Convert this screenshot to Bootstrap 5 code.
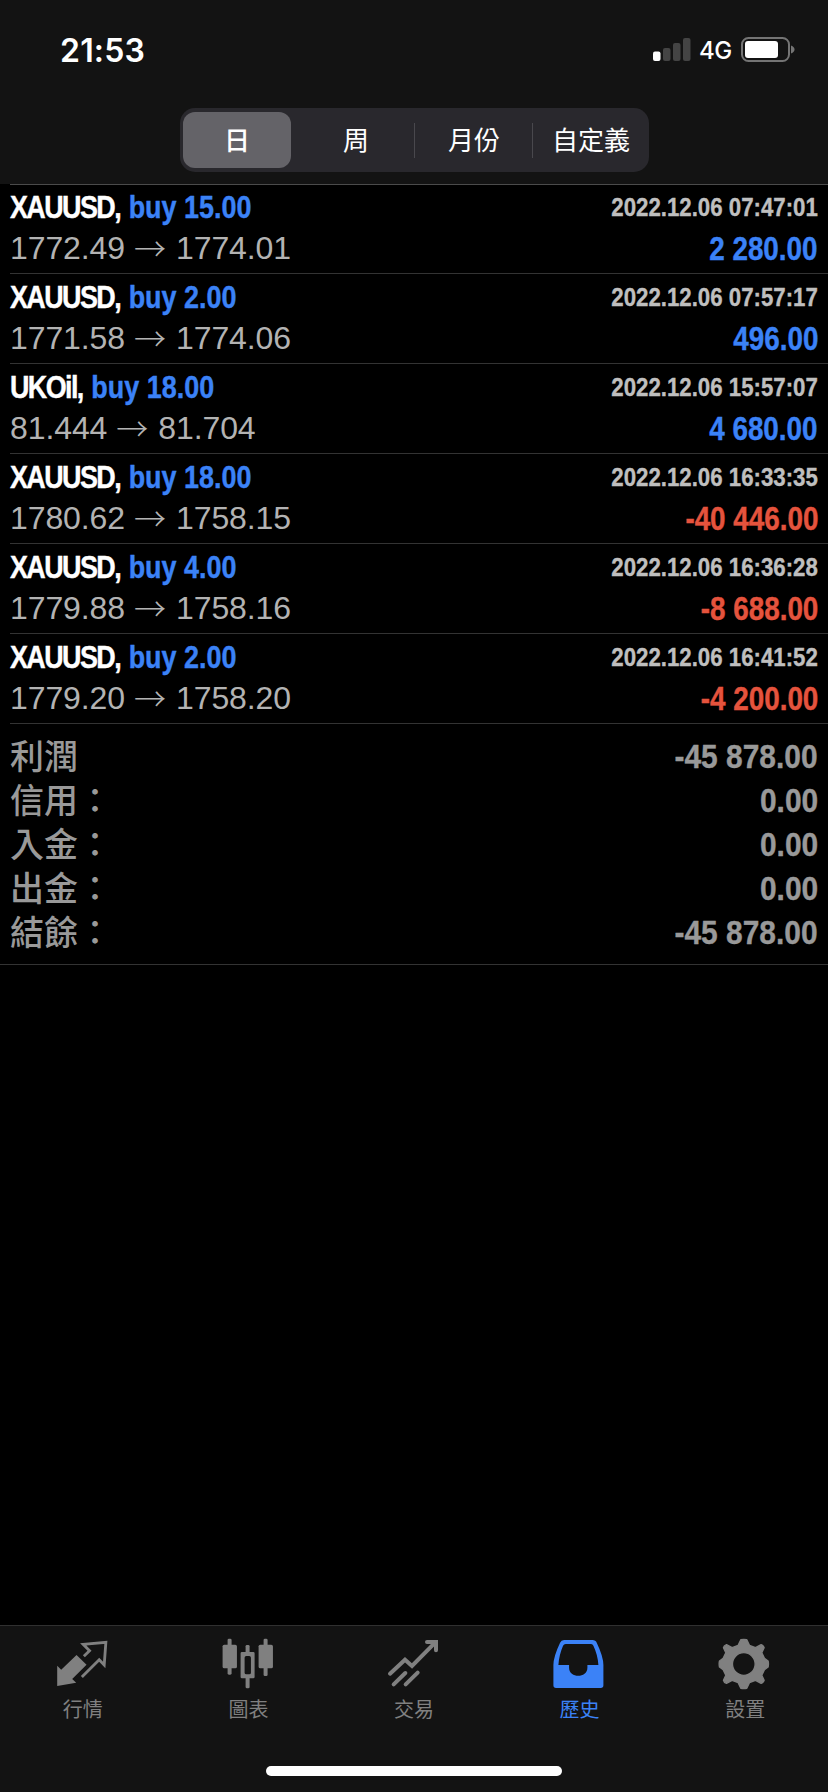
<!DOCTYPE html>
<html lang="zh-Hant" data-bs-theme="dark">
<head>
<meta charset="utf-8">
<meta name="viewport" content="width=device-width, initial-scale=1">
<title>歷史</title>
<link href="https://cdn.jsdelivr.net/npm/bootstrap@5.3.0/dist/css/bootstrap.min.css" rel="stylesheet">
<style>
  :root { --accent: #3b82f7; --loss: #e5533d; --bar: #131313; --cjk: "Noto Sans CJK TC", sans-serif; }
  body { background: #000; font-family: "Liberation Sans", var(--cjk); height: 1792px; overflow: hidden; }
  .top-bar { height: 184px; background: var(--bar); }
  .status { height: 108px; padding: 0 33px 0 60px; font-family: Inter, sans-serif; color: #fff; }
  .clock { font-size: 32px; font-weight: 600; letter-spacing: .2px; line-height: 32px; margin-top: 35px; }
  .signal { margin-top: 36px; height: 28px; gap: 8px; }
  .net { font-size: 24px; font-weight: 500; line-height: 28px; letter-spacing: -.5px; width: 33px; padding-top: 1px; }
  .segments { width: 469px; height: 64px; padding: 4px 3px; background: #29282d; border-radius: 15px; margin-left: 180px; }
  .segments .nav-link { height: 56px; padding: 0; font: 400 26px/54px var(--cjk); color: #fff; border-radius: 12px; text-align: center; }
  .segments .nav-item { flex: 0 0 118px; }
  .segments .nav-item:last-child { flex-basis: 109px; }
  .segments .nav-link.active { background: #646368; font-weight: 500; width: 108px; }
  .segments .nav-item:last-child .nav-link { margin: 0 -3px 0 -4px; }
  .rule-l { width: 1px; height: 35px; background: #49484d; margin-left: -5px; margin-right: 4px; }
  .deal { height: 90px; margin-left: 10px; padding-right: 10px; border-bottom: 1px solid #333; }
  .deals .deal:first-child { border-top: 1px solid #4b4b4b; }
  .deals .deal:first-child .line-a { margin-top: -1px; }
  .line-a { height: 46px; }
  .line-b { height: 36px; }
  /* condensed bold: regular-width face squeezed horizontally */
  .cond { font-weight: 700; white-space: nowrap; transform: scaleX(.842); transform-origin: left; -webkit-text-stroke: .4px currentColor; }
  .stamp, .gain, .total dd { transform-origin: right; }
  .sym { font-size: 32px; line-height: 46px; color: #fff; letter-spacing: -1.9px; word-spacing: 3.2px; }
  .side { font-size: 32px; line-height: 46px; color: var(--accent); }
  .stamp { font-size: 25.5px; line-height: 46px; color: #bfbfbf; transform: scaleX(.872); }
  .price { font-size: 32px; line-height: 36px; color: #b3b3b3; letter-spacing: -.1px; }
  .arrow { font: 300 32px/35px var(--cjk); color: #b3b3b3; width: 32px; margin: 0 10px 0 9px; }
  .gain { font-size: 32.5px; line-height: 39px; color: var(--accent); transform: scaleX(.856); }
  .gain.minus { color: var(--loss); }
  .totals { height: 241px; padding: 10px 10px 0; border-bottom: 1px solid #333; color: #999; }
  .total { height: 44px; }
  .total dt { font: 500 34px/46px "Liberation Sans", var(--cjk); }
  .total dd { font-size: 34px; line-height: 44px; margin: 0; transform: scaleX(.88); }
  .tab-bar { height: 167px; background: var(--bar); border-top: 1px solid #303030; padding-top: 10px; }
  .tab-bar .nav-link { padding: 0; color: #808080; }
  .tab-bar .nav-link.active { color: var(--accent); }
  .tab-bar svg { width: 54px; height: 54px; display: block; margin: 0 auto; }
  .tab-bar span { font: 400 20px/30px var(--cjk); display: block; margin-top: 4px; text-align: center; }
  .home { width: 296px; height: 10px; background: #fff; border-radius: 5px; margin: 42px auto 0; }
</style>
</head>
<body class="d-flex flex-column">
<header class="top-bar flex-shrink-0">
  <div class="status d-flex justify-content-between align-items-start">
    <div class="clock">21:53</div>
    <div class="signal d-flex align-items-center">
      <svg width="38" height="28" viewBox="0 0 38 28"><rect x="0" y="15.5" width="7.5" height="9.5" rx="2" fill="#fff"/><g fill="#444"><rect x="10" y="12" width="7.5" height="13" rx="2"/><rect x="20" y="7" width="7.5" height="18" rx="2"/><rect x="30" y="2" width="7.5" height="23" rx="2"/></g></svg>
      <div class="net">4G</div>
      <svg width="55" height="28" viewBox="0 0 55 28"><rect x="2" y="2" width="47" height="23" rx="6.5" fill="none" stroke="#747474" stroke-width="2"/><rect x="5" y="5" width="33" height="17" rx="3" fill="#fff"/><path d="M51 9.5Q54.500 11 54.500 13.500T51 17.500Z" fill="#747474"/></svg>
    </div>
  </div>
  <ul class="nav segments d-flex flex-nowrap align-items-center">
    <li class="nav-item"><a class="nav-link active">日</a></li>
    <li class="nav-item"><a class="nav-link pe-2">周</a></li>
    <li class="rule-l"></li>
    <li class="nav-item"><a class="nav-link pe-2">月份</a></li>
    <li class="rule-l"></li>
    <li class="nav-item"><a class="nav-link">自定義</a></li>
  </ul>
</header>

<main class="flex-grow-1">
  <section class="deals" id="deals">
    <article class="deal"><div class="line-a d-flex justify-content-between"><div class="cond"><span class="sym">XAUUSD, </span><span class="side">buy 15.00</span></div><time class="cond stamp">2022.12.06 07:47:01</time></div><div class="line-b d-flex justify-content-between"><div class="d-flex"><span class="price">1772.49</span><span class="arrow">→</span><span class="price">1774.01</span></div><div class="cond gain">2 280.00</div></div></article>
    <article class="deal"><div class="line-a d-flex justify-content-between"><div class="cond"><span class="sym">XAUUSD, </span><span class="side">buy 2.00</span></div><time class="cond stamp">2022.12.06 07:57:17</time></div><div class="line-b d-flex justify-content-between"><div class="d-flex"><span class="price">1771.58</span><span class="arrow">→</span><span class="price">1774.06</span></div><div class="cond gain">496.00</div></div></article>
    <article class="deal"><div class="line-a d-flex justify-content-between"><div class="cond"><span class="sym">UKOil, </span><span class="side">buy 18.00</span></div><time class="cond stamp">2022.12.06 15:57:07</time></div><div class="line-b d-flex justify-content-between"><div class="d-flex"><span class="price">81.444</span><span class="arrow">→</span><span class="price">81.704</span></div><div class="cond gain">4 680.00</div></div></article>
    <article class="deal"><div class="line-a d-flex justify-content-between"><div class="cond"><span class="sym">XAUUSD, </span><span class="side">buy 18.00</span></div><time class="cond stamp">2022.12.06 16:33:35</time></div><div class="line-b d-flex justify-content-between"><div class="d-flex"><span class="price">1780.62</span><span class="arrow">→</span><span class="price">1758.15</span></div><div class="cond gain minus">-40 446.00</div></div></article>
    <article class="deal"><div class="line-a d-flex justify-content-between"><div class="cond"><span class="sym">XAUUSD, </span><span class="side">buy 4.00</span></div><time class="cond stamp">2022.12.06 16:36:28</time></div><div class="line-b d-flex justify-content-between"><div class="d-flex"><span class="price">1779.88</span><span class="arrow">→</span><span class="price">1758.16</span></div><div class="cond gain minus">-8 688.00</div></div></article>
    <article class="deal"><div class="line-a d-flex justify-content-between"><div class="cond"><span class="sym">XAUUSD, </span><span class="side">buy 2.00</span></div><time class="cond stamp">2022.12.06 16:41:52</time></div><div class="line-b d-flex justify-content-between"><div class="d-flex"><span class="price">1779.20</span><span class="arrow">→</span><span class="price">1758.20</span></div><div class="cond gain minus">-4 200.00</div></div></article>
  </section>
  <dl class="totals m-0">
    <div class="total d-flex justify-content-between"><dt>利潤</dt><dd class="cond">-45 878.00</dd></div>
    <div class="total d-flex justify-content-between"><dt>信用：</dt><dd class="cond">0.00</dd></div>
    <div class="total d-flex justify-content-between"><dt>入金：</dt><dd class="cond">0.00</dd></div>
    <div class="total d-flex justify-content-between"><dt>出金：</dt><dd class="cond">0.00</dd></div>
    <div class="total d-flex justify-content-between"><dt>結餘：</dt><dd class="cond">-45 878.00</dd></div>
  </dl>
</main>

<footer class="tab-bar flex-shrink-0">
  <nav class="nav nav-fill flex-nowrap">
    <a class="nav-link w-100"><svg viewBox="167.400 78 162 162" fill="currentColor"><path d="M171 167L183 179L229 135L259 164L216 207L228 218L171 228Z"/><path d="M251 139L268 122L249 103L317 97L312 165L297 149L245 201" fill="none" stroke="currentColor" stroke-width="8.500"/></svg><span>行情</span></a>
    <a class="nav-link w-100"><svg viewBox="664.200 78 162 162" fill="currentColor"><rect x="669" y="104" width="43" height="71" rx="5"/><rect x="684" y="86" width="12" height="108" rx="4"/><rect x="777" y="104" width="43" height="71" rx="5"/><rect x="792" y="86" width="12" height="112" rx="4"/><rect x="738" y="105" width="12" height="25" rx="4"/><rect x="738" y="198" width="12" height="37" rx="4"/><path fill-rule="evenodd" d="M727 126H761Q765 126 765 130V201Q765 205 761 205H727Q723 205 723 201V130Q723 126 727 126ZM740 138Q735 138 735 143V188Q735 193 740 193H749Q754 193 754 188V143Q754 138 749 138Z"/></svg><span>圖表</span></a>
    <a class="nav-link w-100"><svg viewBox="261 78 162 162" fill="none" stroke="currentColor" stroke-width="12" stroke-linecap="round" stroke-linejoin="miter"><path d="M270 191L315 149L336 168L406 97M381 96H408V121M281 223L316 189M317 223L353 188"/></svg><span>交易</span></a>
    <a class="nav-link w-100 active"><svg viewBox="73.800 78 162 162" fill="currentColor"><path fill-rule="evenodd" d="M107 90H192Q202 90 205 98Q225 140 225 165V226Q225 234 217 234H83Q75 234 75 226V165Q75 140 95 98Q98 90 107 90ZM112 102Q106 102 104 107Q92 134 90 165H122V173C122 205 177 205 177 173V165H210Q208 134 195 107Q193 102 188 102Z"/></svg><span>歷史</span></a>
    <a class="nav-link w-100"><svg viewBox="570.600 78 162 162" fill="currentColor"><path fill-rule="evenodd" stroke="currentColor" stroke-width="4" stroke-linejoin="round" d="M639 89Q648 87 657 89L665 106L683 113L700 104Q708 107 709 113L702 128L710 145L721 153Q723 162 721 171L710 179L702 196L709 211Q708 217 700 220L683 211L665 218L657 235Q648 237 639 235L631 218L613 211L596 220Q588 217 587 211L594 196L586 179L575 171Q573 162 575 153L586 145L594 128L587 113Q588 107 596 104L613 113L631 106ZM648 128A34 34 0 1 0 648 196A34 34 0 1 0 648 128Z"/></svg><span>設置</span></a>
  </nav>
  <div class="home"></div>
</footer>
<script src="https://cdn.jsdelivr.net/npm/bootstrap@5.3.0/dist/js/bootstrap.bundle.min.js"></script>
</body>
</html>
